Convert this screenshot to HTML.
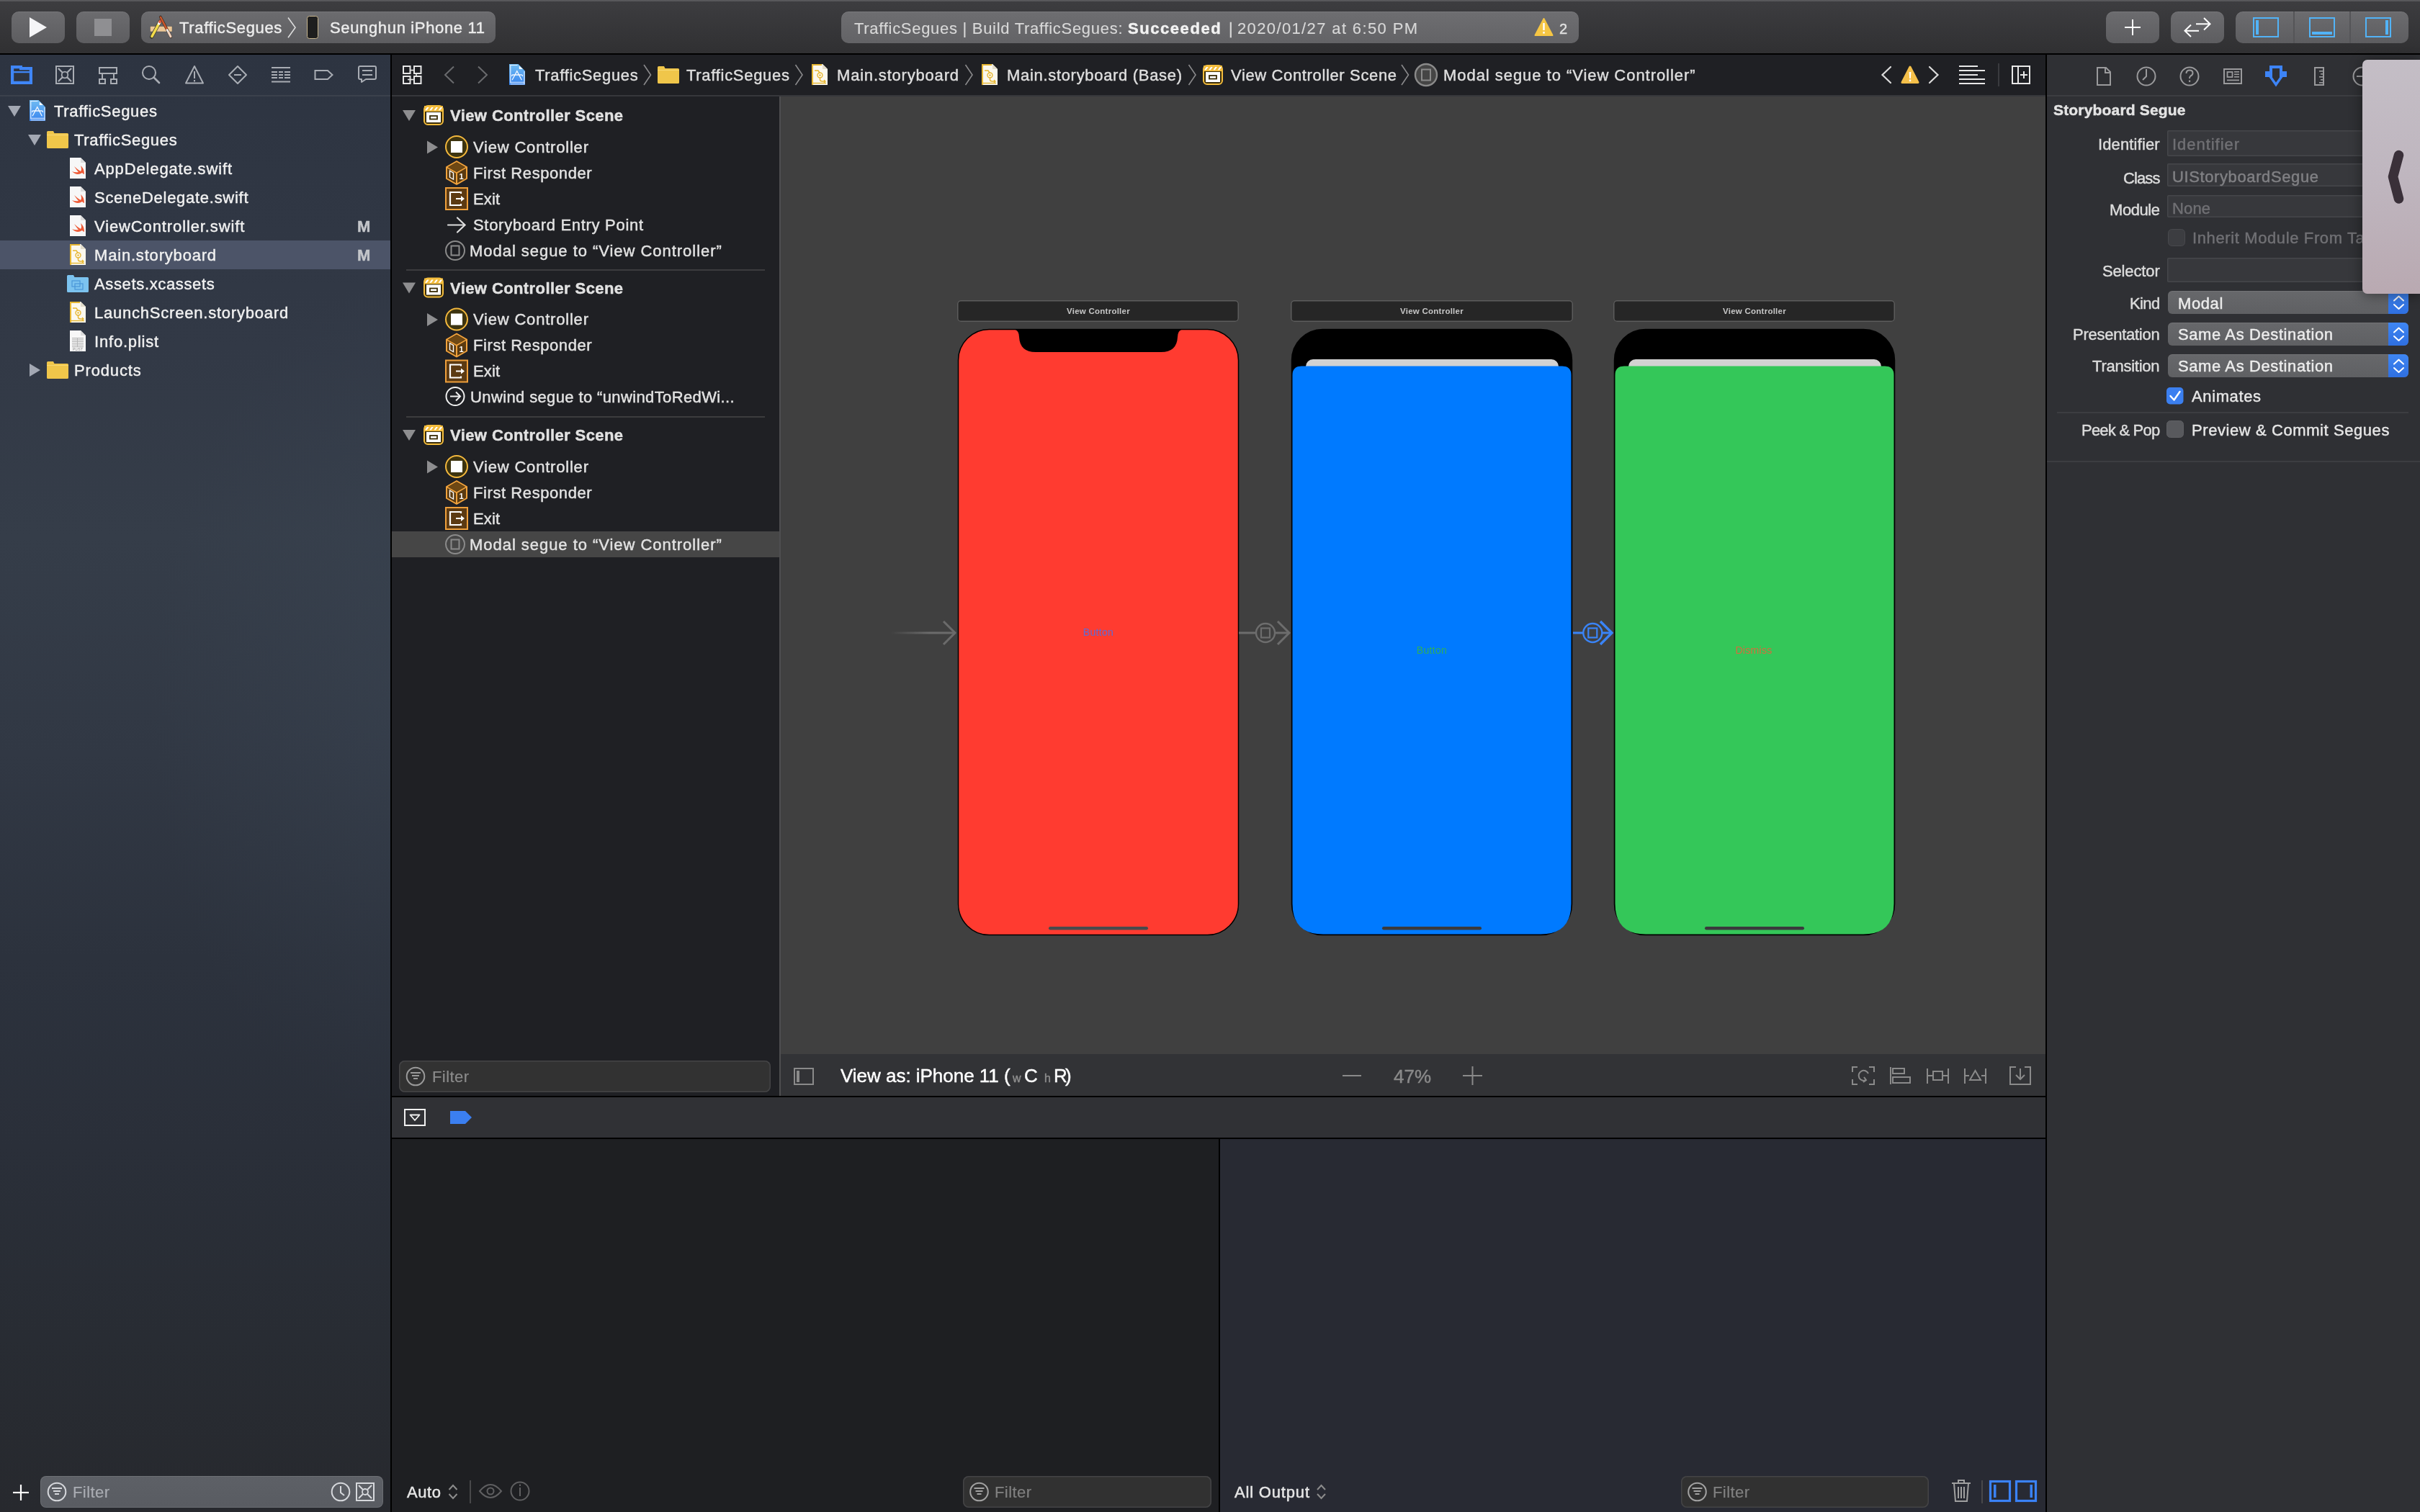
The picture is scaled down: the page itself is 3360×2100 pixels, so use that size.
<!DOCTYPE html>
<html><head><meta charset="utf-8"><style>
*{box-sizing:border-box;margin:0;padding:0}
html,body{width:3360px;height:2100px;overflow:hidden;background:#000;font-family:"Liberation Sans",sans-serif;color:#e6e6e6}
.a{position:absolute}
.t{position:absolute;white-space:pre;line-height:1;-webkit-text-stroke:0.45px currentColor;will-change:transform}
.ov{position:absolute;left:0;top:0;width:3360px;height:2100px;overflow:visible}
</style></head><body>
<div class="a" style="left:0px;top:0px;width:3360px;height:74px;background:linear-gradient(#3d3d40,#303032);"></div>
<div class="a" style="left:0px;top:0px;width:3360px;height:2px;background:#58585b;"></div>
<div class="a" style="left:0px;top:74px;width:3360px;height:2px;background:#000;"></div>
<div class="a" style="left:0px;top:76px;width:542px;height:2024px;background:radial-gradient(ellipse 520px 800px at 600px 900px, rgba(70,84,100,0.22), rgba(70,84,100,0) 75%),linear-gradient(180deg,#2d3441 0%,#323946 20%,#353d49 33%,#313844 48%,#2c323d 62%,#2a2f39 75%,#282c33 88%,#27292e 100%);"></div>
<div class="a" style="left:542px;top:76px;width:2px;height:2024px;background:#000;"></div>
<div class="a" style="left:544px;top:76px;width:2296px;height:56px;background:#1f2024;"></div>
<div class="a" style="left:544px;top:132px;width:2296px;height:2px;background:#36373b;"></div>
<div class="a" style="left:544px;top:134px;width:538px;height:1388px;background:#1f2024;"></div>
<div class="a" style="left:1082px;top:134px;width:2px;height:1388px;background:#4e4e50;"></div>
<div class="a" style="left:1084px;top:134px;width:1756px;height:1330px;background:#404040;"></div>
<div class="a" style="left:1084px;top:1464px;width:1756px;height:58px;background:#323336;"></div>
<div class="a" style="left:544px;top:1522px;width:2296px;height:2px;background:#000;"></div>
<div class="a" style="left:544px;top:1524px;width:2296px;height:56px;background:#303135;"></div>
<div class="a" style="left:544px;top:1580px;width:2296px;height:2px;background:#000;"></div>
<div class="a" style="left:544px;top:1582px;width:1148px;height:518px;background:#1e1f22;"></div>
<div class="a" style="left:1692px;top:1582px;width:2px;height:518px;background:#000;"></div>
<div class="a" style="left:1694px;top:1582px;width:1146px;height:518px;background:#282a33;"></div>
<div class="a" style="left:2840px;top:76px;width:2px;height:2024px;background:#000;"></div>
<div class="a" style="left:2842px;top:76px;width:518px;height:2024px;background:#2f3034;"></div>
<div class="a" style="left:544px;top:132px;width:0px;height:0px;background:#000;"></div>
<div class="a" style="left:0px;top:132px;width:542px;height:2px;background:#3b414c;"></div>
<div class="a" style="left:2842px;top:132px;width:518px;height:2px;background:#3c3d41;"></div>
<div class="a" style="left:16px;top:16px;width:74px;height:44px;background:linear-gradient(#6c6c6f,#5d5d60);border-radius:10px;box-shadow:inset 0 1px 0 rgba(255,255,255,0.08)"></div>
<div class="a" style="left:106px;top:16px;width:74px;height:44px;background:linear-gradient(#6c6c6f,#5d5d60);border-radius:10px;box-shadow:inset 0 1px 0 rgba(255,255,255,0.08)"></div>
<div class="a" style="left:196px;top:16px;width:492px;height:44px;background:linear-gradient(#6c6c6f,#5d5d60);border-radius:10px;box-shadow:inset 0 1px 0 rgba(255,255,255,0.08)"></div>
<div class="a" style="left:2924px;top:16px;width:74px;height:44px;background:linear-gradient(#6c6c6f,#5d5d60);border-radius:10px;box-shadow:inset 0 1px 0 rgba(255,255,255,0.08)"></div>
<div class="a" style="left:3014px;top:16px;width:74px;height:44px;background:linear-gradient(#6c6c6f,#5d5d60);border-radius:10px;box-shadow:inset 0 1px 0 rgba(255,255,255,0.08)"></div>
<div class="a" style="left:3104px;top:16px;width:240px;height:44px;background:linear-gradient(#6c6c6f,#5d5d60);border-radius:10px;box-shadow:inset 0 1px 0 rgba(255,255,255,0.08)"></div>
<div class="a" style="left:1168px;top:16px;width:1024px;height:44px;background:linear-gradient(#6e6e71,#636366);border-radius:10px;box-shadow:inset 0 1px 0 rgba(255,255,255,0.08)"></div>
<svg class="ov" width="3360" height="2100" viewBox="0 0 3360 2100"><polygon points="41,24 65,38 41,52" fill="#f5f5f7"/>
<rect x="131" y="26" width="24" height="24" fill="#8f8f92"/>
<rect x="208.5" y="36.5" width="30.5" height="7.5" fill="#ecc796" stroke="#555" stroke-width="0.5"/><g stroke-linecap="round"><line x1="210.5" y1="51.3" x2="222.4" y2="29.6" stroke="#3a3a2a" stroke-width="5"/><line x1="211" y1="50.5" x2="222" y2="30.3" stroke="#f3dc4c" stroke-width="3.6"/><line x1="220.6" y1="32.8" x2="222" y2="30.3" stroke="#f4f4f4" stroke-width="3.6"/><line x1="222" y1="30.3" x2="222.6" y2="29.2" stroke="#e45a40" stroke-width="3.6"/><line x1="222.8" y1="23.6" x2="237.2" y2="51.2" stroke="#3a2a20" stroke-width="3.8"/><line x1="223" y1="24" x2="232" y2="41.3" stroke="#c9562a" stroke-width="2.6"/><line x1="232" y1="41.3" x2="234" y2="45" stroke="#eeeeee" stroke-width="2.6"/><line x1="234" y1="45" x2="237" y2="50.8" stroke="#f1d2bd" stroke-width="3"/></g></svg>
<div class="t" style="left:249px;top:28.1px;font-size:22px;color:#ececec;font-weight:400;letter-spacing:0.65px;">TrafficSegues</div>
<svg class="ov" width="3360" height="2100" viewBox="0 0 3360 2100"><polyline points="400,24.5 410,38.3 400,52.2" fill="none" stroke="#dcdcdc" stroke-width="1.6"/>
<rect x="426.5" y="22.5" width="15" height="31" rx="3" fill="#1e1e1e" stroke="#c8b68e" stroke-width="1"/></svg>
<div class="t" style="left:458px;top:28.1px;font-size:22px;color:#ececec;font-weight:400;letter-spacing:0.65px;">Seunghun iPhone 11</div>
<div class="t" style="left:1185.5px;top:28.6px;font-size:22px;color:#d8d8d8;font-weight:400;letter-spacing:0.708px;-webkit-text-stroke:0.15px #d8d8d8">TrafficSegues | Build TrafficSegues:</div>
<div class="t" style="left:1566.4px;top:28.6px;font-size:22px;color:#f2f2f2;font-weight:700;letter-spacing:1.555px;">Succeeded</div>
<div class="t" style="left:1706px;top:28.6px;font-size:22px;color:#d8d8d8;font-weight:400;letter-spacing:0px;">|</div>
<div class="t" style="left:1717.8px;top:28.6px;font-size:22px;color:#d8d8d8;font-weight:400;letter-spacing:1.371px;-webkit-text-stroke:0.15px #d8d8d8">2020/01/27 at 6:50 PM</div>
<svg class="ov" width="3360" height="2100" viewBox="0 0 3360 2100"><path d="M2143.5,26 L2155.5,49 L2131.5,49 Z" fill="#f6c644" stroke="#f6c644" stroke-width="2" stroke-linejoin="round"/><rect x="2142.3" y="32" width="2.4" height="10" fill="#fff"/><rect x="2142.3" y="44" width="2.4" height="2.6" fill="#fff"/></svg>
<div class="t" style="left:2165px;top:29.8px;font-size:20px;color:#e0e0e0;font-weight:400;letter-spacing:0px;">2</div>
<svg class="ov" width="3360" height="2100" viewBox="0 0 3360 2100"><line x1="2950" y1="38" x2="2972" y2="38" stroke="#fff" stroke-width="2"/><line x1="2961" y1="27" x2="2961" y2="49" stroke="#fff" stroke-width="2"/>
<g stroke="#fff" stroke-width="2" fill="none"><line x1="3049" y1="33.3" x2="3069" y2="33.3"/><polyline points="3060,25 3068.5,33.3 3060,41.5"/><line x1="3053" y1="42.8" x2="3034" y2="42.8"/><polyline points="3042,34.5 3033.5,42.8 3042,51"/></g></svg>
<div class="a" style="left:3184px;top:16px;width:2px;height:44px;background:#555558;"></div>
<div class="a" style="left:3262px;top:16px;width:2px;height:44px;background:#555558;"></div>
<svg class="ov" width="3360" height="2100" viewBox="0 0 3360 2100"><g stroke="#52b3f7" stroke-width="2" fill="none"><rect x="3129" y="25" width="34" height="26"/><rect x="3207" y="25" width="34" height="26"/><rect x="3285" y="25" width="34" height="26"/></g><rect x="3132" y="28" width="4" height="20" fill="#52b3f7"/><rect x="3210" y="44" width="28" height="4" fill="#52b3f7"/><rect x="3312" y="28" width="4" height="20" fill="#52b3f7"/>
<path fill="#3f86f7" fill-rule="evenodd" d="M15,91 H31 V93 H45 V117 H15 Z M19.2,95.2 H27 V97.3 H40.8 V99 H19.2 Z M19.2,101.2 H40.8 V112.8 H19.2 Z"/>
<g stroke="#a9adb4" fill="none" stroke-width="2"><rect x="78" y="92" width="24" height="24"/><circle cx="90" cy="104" r="4.3" stroke-width="1.8"/></g><g stroke="#a9adb4" stroke-width="2.2" stroke-linecap="round"><line x1="81.5" y1="95.5" x2="86.5" y2="100.5"/><line x1="98.5" y1="95.5" x2="93.5" y2="100.5"/><line x1="81.5" y1="112.5" x2="86.5" y2="107.5"/><line x1="98.5" y1="112.5" x2="93.5" y2="107.5"/></g>
<g stroke="#a9adb4" fill="none" stroke-width="2"><rect x="138" y="94" width="24" height="8"/><rect x="138" y="110" width="8" height="6"/><rect x="154" y="110" width="8" height="6"/><line x1="142" y1="102" x2="142" y2="110"/><line x1="158" y1="102" x2="158" y2="110"/></g>
<g stroke="#a9adb4" fill="none" stroke-width="2"><circle cx="207" cy="101" r="9"/><line x1="213.5" y1="107.5" x2="221" y2="115" stroke-width="2.6" stroke-linecap="round"/></g>
<path d="M270,92 L282,115.5 H258 Z" fill="none" stroke="#a9adb4" stroke-width="2" stroke-linejoin="round"/><rect x="269" y="99" width="2" height="10" fill="#a9adb4"/><rect x="269" y="111" width="2" height="2.4" fill="#a9adb4"/>
<path d="M330,92 L342,104 L330,116 L318,104 Z" fill="none" stroke="#a9adb4" stroke-width="2" stroke-linejoin="round"/><rect x="325" y="103" width="10" height="2" fill="#a9adb4"/>
<g fill="#a9adb4"><rect x="377" y="93" width="26" height="2"/><rect x="377" y="112.5" width="26" height="2"/><rect x="377" y="99" width="8" height="2"/><rect x="387" y="99" width="6" height="2"/><rect x="395" y="99" width="8" height="2"/><rect x="377" y="103" width="8" height="2"/><rect x="387" y="103" width="6" height="2"/><rect x="395" y="103" width="8" height="2"/><rect x="377" y="107" width="8" height="2"/><rect x="387" y="107" width="6" height="2"/><rect x="395" y="107" width="8" height="2"/></g>
<path d="M437.5,98 H455 L461.5,104 L455,110 H437.5 Z" fill="none" stroke="#a9adb4" stroke-width="2"/>
<path d="M500,92 H520 Q522,92 522,94 V108 Q522,110 520,110 H508 L502,114 V110 H500 Q498,110 498,108 V94 Q498,92 500,92 Z" fill="none" stroke="#a9adb4" stroke-width="2" stroke-linejoin="round"/><rect x="503" y="97" width="14" height="2" fill="#a9adb4"/><rect x="503" y="103" width="14" height="2" fill="#a9adb4"/></svg>
<div class="a" style="left:0px;top:334px;width:542px;height:40px;background:#4c5468;"></div>
<svg class="ov" width="3360" height="2100" viewBox="0 0 3360 2100"><polygon points="11,147 29,147 20,162" fill="#a3a8b3"/>
<defs><linearGradient id="pg41139" x1="0" y1="0" x2="0" y2="1"><stop offset="0" stop-color="#72bdf2"/><stop offset="1" stop-color="#3784ef"/></linearGradient></defs><path d="M41,139 H53.6 L63,148.4 V168 H41 Z" fill="url(#pg41139)"/><path d="M54.8,141.6 V146 H59.9 Z" fill="#ffffff"/><path d="M42.8,165.2 V140.5 H52.5 M62,149 V166.7 H42.8 M42.8,164.2 H62" fill="none" stroke="#e6f1ff" stroke-width="1.1"/><g stroke="#f4f8ff" stroke-width="1.3" fill="none" stroke-linecap="round"><path d="M45.3,160.7 L51.8,148.6 L58.1,160.7"/><path d="M44.8,155.5 Q44.3,153.5 47,154 H56.5 Q59.6,153.5 59.4,155.5"/></g></svg>
<div class="t" style="left:75px;top:143.9px;font-size:22px;color:#f0f0f0;font-weight:400;letter-spacing:0.707px;">TrafficSegues</div>
<svg class="ov" width="3360" height="2100" viewBox="0 0 3360 2100"><polygon points="39,187 57,187 48,202" fill="#a3a8b3"/>
<path d="M65,183.5 Q65,182 66.5,182 H74 L75.5,185 H93.5 Q95,185 95,186.5 V204.5 Q95,206 93.5,206 H66.5 Q65,206 65,204.5 Z" fill="#f0c64a"/><rect x="65" y="187" width="30" height="1" fill="#f7d873"/></svg>
<div class="t" style="left:103px;top:183.9px;font-size:22px;color:#f0f0f0;font-weight:400;letter-spacing:0.682px;">TrafficSegues</div>
<svg class="ov" width="3360" height="2100" viewBox="0 0 3360 2100"><path d="M97,219 H112 L119,226 V248 H97 Z" fill="#f7f7f7"/><path d="M112,219 V226 H119" fill="#dcdcdc"/><path d="M100,238 Q107,245 114,240 Q116,242 117,242 Q117,234 112,230 Q114,235 112,238 Q107,235 103,231 Q107,237 109,239 Q104,240 100,238 Z" fill="#ee5a36"/></svg>
<div class="t" style="left:130.7px;top:223.9px;font-size:22px;color:#f0f0f0;font-weight:400;letter-spacing:0.855px;">AppDelegate.swift</div>
<svg class="ov" width="3360" height="2100" viewBox="0 0 3360 2100"><path d="M97,259 H112 L119,266 V288 H97 Z" fill="#f7f7f7"/><path d="M112,259 V266 H119" fill="#dcdcdc"/><path d="M100,278 Q107,285 114,280 Q116,282 117,282 Q117,274 112,270 Q114,275 112,278 Q107,275 103,271 Q107,277 109,279 Q104,280 100,278 Z" fill="#ee5a36"/></svg>
<div class="t" style="left:130.7px;top:263.9px;font-size:22px;color:#f0f0f0;font-weight:400;letter-spacing:0.72px;">SceneDelegate.swift</div>
<svg class="ov" width="3360" height="2100" viewBox="0 0 3360 2100"><path d="M97,299 H112 L119,306 V328 H97 Z" fill="#f7f7f7"/><path d="M112,299 V306 H119" fill="#dcdcdc"/><path d="M100,318 Q107,325 114,320 Q116,322 117,322 Q117,314 112,310 Q114,315 112,318 Q107,315 103,311 Q107,317 109,319 Q104,320 100,318 Z" fill="#ee5a36"/></svg>
<div class="t" style="left:130.7px;top:303.9px;font-size:22px;color:#f0f0f0;font-weight:400;letter-spacing:0.881px;">ViewController.swift</div>
<div class="t" style="left:496px;top:303.9px;font-size:22px;color:#c4c6ca;font-weight:700;letter-spacing:0px;">M</div>
<svg class="ov" width="3360" height="2100" viewBox="0 0 3360 2100"><path d="M97,339 H112 L119,346 V368 H97 Z" fill="#fbf8ee"/><path d="M112,339 V346 H119" fill="#e2dccb"/><path d="M98,340 H111" stroke="#e7b733" stroke-width="2"/><path d="M98,339 V368" stroke="#e7b733" stroke-width="2"/><g stroke="#e7b733" stroke-width="1.4" fill="none"><path d="M101,348 H106 L108,351"/><circle cx="108.5" cy="354.5" r="3.5"/><path d="M108.5,358 V361 Q109,363 112,363 H116 M114,361 L116,363 L114,365"/><path d="M99,365.5 H117"/></g><circle cx="108.5" cy="354.5" r="1.2" fill="#e7b733"/></svg>
<div class="t" style="left:130.7px;top:343.9px;font-size:22px;color:#f0f0f0;font-weight:400;letter-spacing:0.812px;">Main.storyboard</div>
<div class="t" style="left:496px;top:343.9px;font-size:22px;color:#c4c6ca;font-weight:700;letter-spacing:0px;">M</div>
<svg class="ov" width="3360" height="2100" viewBox="0 0 3360 2100"><path d="M93,383.5 Q93,382 94.5,382 H102 L103.5,385 H121.5 Q123,385 123,386.5 V404.5 Q123,406 121.5,406 H94.5 Q93,406 93,404.5 Z" fill="#7cc3ef"/><g stroke="#4a97d8" stroke-width="1.2" fill="none"><rect x="100" y="390" width="11" height="8"/><rect x="104" y="394" width="11" height="8"/></g></svg>
<div class="t" style="left:130.7px;top:383.9px;font-size:22px;color:#f0f0f0;font-weight:400;letter-spacing:0.643px;">Assets.xcassets</div>
<svg class="ov" width="3360" height="2100" viewBox="0 0 3360 2100"><path d="M97,419 H112 L119,426 V448 H97 Z" fill="#fbf8ee"/><path d="M112,419 V426 H119" fill="#e2dccb"/><path d="M98,420 H111" stroke="#e7b733" stroke-width="2"/><path d="M98,419 V448" stroke="#e7b733" stroke-width="2"/><g stroke="#e7b733" stroke-width="1.4" fill="none"><path d="M101,428 H106 L108,431"/><circle cx="108.5" cy="434.5" r="3.5"/><path d="M108.5,438 V441 Q109,443 112,443 H116 M114,441 L116,443 L114,445"/><path d="M99,445.5 H117"/></g><circle cx="108.5" cy="434.5" r="1.2" fill="#e7b733"/></svg>
<div class="t" style="left:130.7px;top:423.9px;font-size:22px;color:#f0f0f0;font-weight:400;letter-spacing:0.781px;">LaunchScreen.storyboard</div>
<svg class="ov" width="3360" height="2100" viewBox="0 0 3360 2100"><path d="M97,459 H112 L119,466 V488 H97 Z" fill="#f7f7f7"/><path d="M112,459 V466 H119" fill="#dcdcdc"/><g fill="#b8b8b8"><rect x="100" y="469.0" width="16" height="1.2"/><rect x="100" y="471.4" width="16" height="1.2"/><rect x="100" y="473.8" width="16" height="1.2"/><rect x="100" y="476.2" width="16" height="1.2"/><rect x="100" y="478.6" width="16" height="1.2"/><rect x="100" y="481.0" width="16" height="1.2"/></g><rect x="107" y="469" width="1" height="13" fill="#b8b8b8"/><text x="108" y="486.5" font-size="5" font-family="Liberation Sans" fill="#888" text-anchor="middle">PLIST</text></svg>
<div class="t" style="left:130.7px;top:463.9px;font-size:22px;color:#f0f0f0;font-weight:400;letter-spacing:0.809px;">Info.plist</div>
<svg class="ov" width="3360" height="2100" viewBox="0 0 3360 2100"><polygon points="41,505 56,514 41,523" fill="#a3a8b3"/>
<path d="M65,503.5 Q65,502 66.5,502 H74 L75.5,505 H93.5 Q95,505 95,506.5 V524.5 Q95,526 93.5,526 H66.5 Q65,526 65,524.5 Z" fill="#f0c64a"/><rect x="65" y="507" width="30" height="1" fill="#f7d873"/></svg>
<div class="t" style="left:103px;top:503.9px;font-size:22px;color:#f0f0f0;font-weight:400;letter-spacing:0.841px;">Products</div>
<svg class="ov" width="3360" height="2100" viewBox="0 0 3360 2100"><g stroke="#ffffff" stroke-width="2.2"><line x1="18" y1="2073" x2="40" y2="2073"/><line x1="29" y1="2062" x2="29" y2="2084"/></g></svg>
<div class="a" style="left:56px;top:2050px;width:476px;height:44px;background:linear-gradient(#5d6066,#595c62);border-radius:8px;box-shadow:inset 0 0 0 1px rgba(255,255,255,0.10)"></div>
<svg class="ov" width="3360" height="2100" viewBox="0 0 3360 2100"><circle cx="79" cy="2072" r="12.3" fill="none" stroke="#d6d8dc" stroke-width="2"/><g fill="#d6d8dc"><rect x="72" y="2066" width="14" height="2"/><rect x="74" y="2070" width="10" height="2"/><rect x="76" y="2074" width="6" height="2"/></g></svg>
<div class="t" style="left:101px;top:2062.1px;font-size:22px;color:#a9acb2;font-weight:400;letter-spacing:0.422px;-webkit-text-stroke:0.2px #a9acb2">Filter</div>
<svg class="ov" width="3360" height="2100" viewBox="0 0 3360 2100"><circle cx="473" cy="2072" r="12.3" fill="none" stroke="#d6d8dc" stroke-width="2"/><path d="M473,2064 V2073 L478,2077" fill="none" stroke="#d6d8dc" stroke-width="2"/>
<g stroke="#d6d8dc" fill="none" stroke-width="2"><rect x="495" y="2060" width="24" height="24"/><circle cx="507" cy="2072" r="4" stroke-width="1.8"/></g><g stroke="#d6d8dc" stroke-width="2" stroke-linecap="round"><line x1="498.5" y1="2063.5" x2="503.5" y2="2068.5"/><line x1="515.5" y1="2063.5" x2="510.5" y2="2068.5"/><line x1="498.5" y1="2080.5" x2="503.5" y2="2075.5"/><line x1="515.5" y1="2080.5" x2="510.5" y2="2075.5"/></g>
<g stroke="#e6e6e6" stroke-width="2" fill="none"><rect x="560" y="92" width="9.5" height="10"/><rect x="575" y="92" width="9.5" height="10"/><rect x="560" y="106" width="9.5" height="10"/><rect x="575" y="106" width="9.5" height="10"/></g><g stroke="#e6e6e6" stroke-width="1.6"><line x1="569" y1="97.5" x2="575" y2="97.5"/><line x1="578" y1="102" x2="578" y2="106"/><line x1="566" y1="110.5" x2="575" y2="110.5"/></g>
<g stroke="#6a6b6e" stroke-width="2" fill="none"><polyline points="630,92.5 618,104 630,115.5"/><polyline points="664,92.5 676,104 664,115.5"/></g>
<defs><linearGradient id="pg70789" x1="0" y1="0" x2="0" y2="1"><stop offset="0" stop-color="#72bdf2"/><stop offset="1" stop-color="#3784ef"/></linearGradient></defs><path d="M707,89 H719.6 L729,98.4 V118 H707 Z" fill="url(#pg70789)"/><path d="M720.8,91.6 V96 H725.9 Z" fill="#ffffff"/><path d="M708.8,115.2 V90.5 H718.5 M728,99 V116.7 H708.8 M708.8,114.2 H728" fill="none" stroke="#e6f1ff" stroke-width="1.1"/><g stroke="#f4f8ff" stroke-width="1.3" fill="none" stroke-linecap="round"><path d="M711.3,110.7 L717.8,98.6 L724.1,110.7"/><path d="M710.8,105.5 Q710.3,103.5 713,104 H722.5 Q725.6,103.5 725.4,105.5"/></g></svg>
<div class="t" style="left:743px;top:93.9px;font-size:22px;color:#dedede;font-weight:400;letter-spacing:0.69px;">TrafficSegues</div>
<svg class="ov" width="3360" height="2100" viewBox="0 0 3360 2100"><polyline points="894,90 903.5,104.0 894,118" fill="none" stroke="#8a8a8c" stroke-width="1.6"/>
<path d="M913,93.5 Q913,92 914.5,92 H922 L923.5,95 H941.5 Q943,95 943,96.5 V114.5 Q943,116 941.5,116 H914.5 Q913,116 913,114.5 Z" fill="#f0c64a"/><rect x="913" y="97" width="30" height="1" fill="#f7d873"/></svg>
<div class="t" style="left:953px;top:93.9px;font-size:22px;color:#dedede;font-weight:400;letter-spacing:0.707px;">TrafficSegues</div>
<svg class="ov" width="3360" height="2100" viewBox="0 0 3360 2100"><polyline points="1104.5,90 1114.0,104.0 1104.5,118" fill="none" stroke="#8a8a8c" stroke-width="1.6"/>
<path d="M1127,89 H1142 L1149,96 V118 H1127 Z" fill="#fbf8ee"/><path d="M1142,89 V96 H1149" fill="#e2dccb"/><path d="M1128,90 H1141" stroke="#e7b733" stroke-width="2"/><path d="M1128,89 V118" stroke="#e7b733" stroke-width="2"/><g stroke="#e7b733" stroke-width="1.4" fill="none"><path d="M1131,98 H1136 L1138,101"/><circle cx="1138.5" cy="104.5" r="3.5"/><path d="M1138.5,108 V111 Q1139,113 1142,113 H1146 M1144,111 L1146,113 L1144,115"/><path d="M1129,115.5 H1147"/></g><circle cx="1138.5" cy="104.5" r="1.2" fill="#e7b733"/></svg>
<div class="t" style="left:1162px;top:93.9px;font-size:22px;color:#dedede;font-weight:400;letter-spacing:0.805px;">Main.storyboard</div>
<svg class="ov" width="3360" height="2100" viewBox="0 0 3360 2100"><polyline points="1340.5,90 1350.0,104.0 1340.5,118" fill="none" stroke="#8a8a8c" stroke-width="1.6"/>
<path d="M1363,89 H1378 L1385,96 V118 H1363 Z" fill="#fbf8ee"/><path d="M1378,89 V96 H1385" fill="#e2dccb"/><path d="M1364,90 H1377" stroke="#e7b733" stroke-width="2"/><path d="M1364,89 V118" stroke="#e7b733" stroke-width="2"/><g stroke="#e7b733" stroke-width="1.4" fill="none"><path d="M1367,98 H1372 L1374,101"/><circle cx="1374.5" cy="104.5" r="3.5"/><path d="M1374.5,108 V111 Q1375,113 1378,113 H1382 M1380,111 L1382,113 L1380,115"/><path d="M1365,115.5 H1383"/></g><circle cx="1374.5" cy="104.5" r="1.2" fill="#e7b733"/></svg>
<div class="t" style="left:1398px;top:93.9px;font-size:22px;color:#dedede;font-weight:400;letter-spacing:0.684px;">Main.storyboard (Base)</div>
<svg class="ov" width="3360" height="2100" viewBox="0 0 3360 2100"><polyline points="1650.5,90 1660.0,104.0 1650.5,118" fill="none" stroke="#8a8a8c" stroke-width="1.6"/>
<rect x="1671" y="91" width="26" height="26" rx="5" fill="#3a2d08" stroke="#f4bd3d" stroke-width="2"/><rect x="1671" y="91" width="26" height="8" fill="#f4bd3d"/><g fill="#fff"><path d="M1672.0,97.2 L1675.0,93 H1677.6 L1674.6,97.2 Z"/><path d="M1678.2,97.2 L1681.2,93 H1683.8 L1680.8,97.2 Z"/><path d="M1684.4,97.2 L1687.4,93 H1690.0 L1687.0,97.2 Z"/><path d="M1690.6,97.2 L1693.6,93 H1696.1999999999998 L1693.1999999999998,97.2 Z"/></g><rect x="1674" y="100" width="20" height="14" fill="#fff"/><rect x="1679" y="105" width="10" height="4.5" fill="none" stroke="#3a2d08" stroke-width="1.8"/></svg>
<div class="t" style="left:1709px;top:93.9px;font-size:22px;color:#dedede;font-weight:400;letter-spacing:0.637px;">View Controller Scene</div>
<svg class="ov" width="3360" height="2100" viewBox="0 0 3360 2100"><polyline points="1946,90 1955.5,104.0 1946,118" fill="none" stroke="#8a8a8c" stroke-width="1.6"/>
<circle cx="1980" cy="104" r="15" fill="#454545" stroke="#8a8a8a" stroke-width="2.4"/><rect x="1974" y="96.5" width="12" height="15" fill="none" stroke="#8a8a8a" stroke-width="2"/></svg>
<div class="t" style="left:2004px;top:93.9px;font-size:22px;color:#dedede;font-weight:400;letter-spacing:0.956px;">Modal segue to “View Controller”</div>
<svg class="ov" width="3360" height="2100" viewBox="0 0 3360 2100"><g stroke="#dcdcdc" stroke-width="2.2" fill="none" stroke-linecap="round"><polyline points="2625,93 2613.5,104 2625,115"/><polyline points="2679,93 2690.5,104 2679,115"/></g>
<path d="M2652,93 L2663,114.5 H2641 Z" fill="#f5c04a" stroke="#f5c04a" stroke-width="3" stroke-linejoin="round"/><path d="M2650.6,100 H2653.4 L2652.8,109 H2651.2 Z" fill="#fff"/><rect x="2650.8" y="110.5" width="2.4" height="2.6" fill="#fff"/>
<g fill="#e8e8e8"><rect x="2720" y="91" width="26" height="2"/><rect x="2720" y="97" width="36" height="2"/><rect x="2720" y="103" width="26" height="2"/><rect x="2720" y="109" width="36" height="2"/><rect x="2720" y="115" width="36" height="2"/></g></svg>
<div class="a" style="left:2774px;top:88px;width:2px;height:32px;background:#3a3b3f;"></div>
<svg class="ov" width="3360" height="2100" viewBox="0 0 3360 2100"><g stroke="#e8e8e8" stroke-width="2" fill="none"><rect x="2794" y="92" width="24" height="24"/><line x1="2802" y1="92" x2="2802" y2="116"/><line x1="2805" y1="104" x2="2815" y2="104"/><line x1="2810" y1="99" x2="2810" y2="109"/></g></svg>
<div class="a" style="left:544px;top:738px;width:538px;height:36px;background:#464646;"></div>
<svg class="ov" width="3360" height="2100" viewBox="0 0 3360 2100"><polygon points="559,153 577,153 568,168" fill="#8e8e90"/>
<rect x="589" y="147" width="26" height="26" rx="5" fill="#3a2d08" stroke="#f4bd3d" stroke-width="2"/><rect x="589" y="147" width="26" height="8" fill="#f4bd3d"/><g fill="#fff"><path d="M590.0,153.2 L593.0,149 H595.6 L592.6,153.2 Z"/><path d="M596.2,153.2 L599.2,149 H601.8000000000001 L598.8000000000001,153.2 Z"/><path d="M602.4,153.2 L605.4,149 H608.0 L605.0,153.2 Z"/><path d="M608.6,153.2 L611.6,149 H614.2 L611.2,153.2 Z"/></g><rect x="592" y="156" width="20" height="14" fill="#fff"/><rect x="597" y="161" width="10" height="4.5" fill="none" stroke="#3a2d08" stroke-width="1.8"/></svg>
<div class="t" style="left:625px;top:150.1px;font-size:22px;color:#e2e2e2;font-weight:700;letter-spacing:0.406px;">View Controller Scene</div>
<svg class="ov" width="3360" height="2100" viewBox="0 0 3360 2100"><polygon points="593,195.5 608,204.5 593,213.5" fill="#8e8e90"/>
<circle cx="634" cy="204.0" r="15" fill="#3d3410" stroke="#f3b83d" stroke-width="2"/><rect x="626" y="196.0" width="16" height="16" fill="#fff"/></svg>
<div class="t" style="left:657px;top:193.6px;font-size:22px;color:#e2e2e2;font-weight:400;letter-spacing:0.801px;">View Controller</div>
<svg class="ov" width="3360" height="2100" viewBox="0 0 3360 2100"><path d="M634,224.0 L648,232.0 V248.0 L634,256.0 L620,248.0 V232.0 Z" fill="#5a3a10" stroke="#f0a23c" stroke-width="2" stroke-linejoin="round"/><path d="M620,232.0 L634,240.0 L648,232.0 M634,240.0 V256.0" fill="none" stroke="#f0a23c" stroke-width="2"/><path d="M634,226.0 L646,232.5 L634,239.0 L622,232.5 Z" fill="#6e4814"/><rect x="624.5" y="237.0" width="5" height="9" fill="none" stroke="#fff" stroke-width="1.4" transform="skewY(30) translate(0,-360.34)"/><text x="640.5" y="249.0" font-size="11" font-weight="700" font-family="Liberation Sans" fill="#fff" text-anchor="middle">1</text></svg>
<div class="t" style="left:657px;top:229.6px;font-size:22px;color:#e2e2e2;font-weight:400;letter-spacing:0.579px;">First Responder</div>
<svg class="ov" width="3360" height="2100" viewBox="0 0 3360 2100"><rect x="619" y="261.0" width="30" height="30" fill="#5c3a12" stroke="#ee9f3b" stroke-width="2"/><path d="M640,269.0 V267.0 H625 V285.0 H640 V283.0" fill="none" stroke="#fff" stroke-width="2.2"/><path d="M633,276.0 H642" stroke="#fff" stroke-width="2"/><path d="M640,272.0 L645,276.0 L640,280.0 Z" fill="#fff"/></svg>
<div class="t" style="left:657px;top:265.6px;font-size:22px;color:#e2e2e2;font-weight:400;letter-spacing:0.109px;">Exit</div>
<svg class="ov" width="3360" height="2100" viewBox="0 0 3360 2100"><g stroke="#dedede" stroke-width="2.2" fill="none" stroke-linecap="round"><line x1="622" y1="312.5" x2="645" y2="312.5"/><polyline points="635,302.5 645.5,312.5 635,322.5"/></g></svg>
<div class="t" style="left:657px;top:301.6px;font-size:22px;color:#e2e2e2;font-weight:400;letter-spacing:0.699px;">Storyboard Entry Point</div>
<svg class="ov" width="3360" height="2100" viewBox="0 0 3360 2100"><circle cx="632" cy="348.0" r="13" fill="none" stroke="#8a8a8a" stroke-width="2"/><rect x="626.5" y="341.5" width="11" height="13" fill="none" stroke="#8a8a8a" stroke-width="2"/></svg>
<div class="t" style="left:652px;top:337.6px;font-size:22px;color:#e2e2e2;font-weight:400;letter-spacing:0.962px;">Modal segue to “View Controller”</div>
<div class="a" style="left:564px;top:374px;width:498px;height:2px;background:#3c3c3e;"></div>
<svg class="ov" width="3360" height="2100" viewBox="0 0 3360 2100"><polygon points="559,392.5 577,392.5 568,407.5" fill="#8e8e90"/>
<rect x="589" y="386.5" width="26" height="26" rx="5" fill="#3a2d08" stroke="#f4bd3d" stroke-width="2"/><rect x="589" y="386.5" width="26" height="8" fill="#f4bd3d"/><g fill="#fff"><path d="M590.0,392.7 L593.0,388.5 H595.6 L592.6,392.7 Z"/><path d="M596.2,392.7 L599.2,388.5 H601.8000000000001 L598.8000000000001,392.7 Z"/><path d="M602.4,392.7 L605.4,388.5 H608.0 L605.0,392.7 Z"/><path d="M608.6,392.7 L611.6,388.5 H614.2 L611.2,392.7 Z"/></g><rect x="592" y="395.5" width="20" height="14" fill="#fff"/><rect x="597" y="400.5" width="10" height="4.5" fill="none" stroke="#3a2d08" stroke-width="1.8"/></svg>
<div class="t" style="left:625px;top:389.6px;font-size:22px;color:#e2e2e2;font-weight:700;letter-spacing:0.406px;">View Controller Scene</div>
<svg class="ov" width="3360" height="2100" viewBox="0 0 3360 2100"><polygon points="593,435.0 608,444.0 593,453.0" fill="#8e8e90"/>
<circle cx="634" cy="443.5" r="15" fill="#3d3410" stroke="#f3b83d" stroke-width="2"/><rect x="626" y="435.5" width="16" height="16" fill="#fff"/></svg>
<div class="t" style="left:657px;top:433.1px;font-size:22px;color:#e2e2e2;font-weight:400;letter-spacing:0.801px;">View Controller</div>
<svg class="ov" width="3360" height="2100" viewBox="0 0 3360 2100"><path d="M634,463.5 L648,471.5 V487.5 L634,495.5 L620,487.5 V471.5 Z" fill="#5a3a10" stroke="#f0a23c" stroke-width="2" stroke-linejoin="round"/><path d="M620,471.5 L634,479.5 L648,471.5 M634,479.5 V495.5" fill="none" stroke="#f0a23c" stroke-width="2"/><path d="M634,465.5 L646,472.0 L634,478.5 L622,472.0 Z" fill="#6e4814"/><rect x="624.5" y="476.5" width="5" height="9" fill="none" stroke="#fff" stroke-width="1.4" transform="skewY(30) translate(0,-360.34)"/><text x="640.5" y="488.5" font-size="11" font-weight="700" font-family="Liberation Sans" fill="#fff" text-anchor="middle">1</text></svg>
<div class="t" style="left:657px;top:469.1px;font-size:22px;color:#e2e2e2;font-weight:400;letter-spacing:0.579px;">First Responder</div>
<svg class="ov" width="3360" height="2100" viewBox="0 0 3360 2100"><rect x="619" y="500.5" width="30" height="30" fill="#5c3a12" stroke="#ee9f3b" stroke-width="2"/><path d="M640,508.5 V506.5 H625 V524.5 H640 V522.5" fill="none" stroke="#fff" stroke-width="2.2"/><path d="M633,515.5 H642" stroke="#fff" stroke-width="2"/><path d="M640,511.5 L645,515.5 L640,519.5 Z" fill="#fff"/></svg>
<div class="t" style="left:657px;top:505.1px;font-size:22px;color:#e2e2e2;font-weight:400;letter-spacing:0.109px;">Exit</div>
<svg class="ov" width="3360" height="2100" viewBox="0 0 3360 2100"><circle cx="632" cy="550.5" r="12.5" fill="none" stroke="#f0f0f0" stroke-width="2"/><g stroke="#f0f0f0" stroke-width="2" fill="none"><line x1="625" y1="550.5" x2="639" y2="550.5"/><polyline points="633,544.5 639,550.5 633,556.5"/></g></svg>
<div class="t" style="left:653px;top:541.1px;font-size:22px;color:#e2e2e2;font-weight:400;letter-spacing:0.378px;">Unwind segue to “unwindToRedWi...</div>
<div class="a" style="left:564px;top:578px;width:498px;height:2px;background:#3c3c3e;"></div>
<svg class="ov" width="3360" height="2100" viewBox="0 0 3360 2100"><polygon points="559,597 577,597 568,612" fill="#8e8e90"/>
<rect x="589" y="591" width="26" height="26" rx="5" fill="#3a2d08" stroke="#f4bd3d" stroke-width="2"/><rect x="589" y="591" width="26" height="8" fill="#f4bd3d"/><g fill="#fff"><path d="M590.0,597.2 L593.0,593 H595.6 L592.6,597.2 Z"/><path d="M596.2,597.2 L599.2,593 H601.8000000000001 L598.8000000000001,597.2 Z"/><path d="M602.4,597.2 L605.4,593 H608.0 L605.0,597.2 Z"/><path d="M608.6,597.2 L611.6,593 H614.2 L611.2,597.2 Z"/></g><rect x="592" y="600" width="20" height="14" fill="#fff"/><rect x="597" y="605" width="10" height="4.5" fill="none" stroke="#3a2d08" stroke-width="1.8"/></svg>
<div class="t" style="left:625px;top:594.1px;font-size:22px;color:#e2e2e2;font-weight:700;letter-spacing:0.406px;">View Controller Scene</div>
<svg class="ov" width="3360" height="2100" viewBox="0 0 3360 2100"><polygon points="593,639.5 608,648.5 593,657.5" fill="#8e8e90"/>
<circle cx="634" cy="648.0" r="15" fill="#3d3410" stroke="#f3b83d" stroke-width="2"/><rect x="626" y="640.0" width="16" height="16" fill="#fff"/></svg>
<div class="t" style="left:657px;top:637.6px;font-size:22px;color:#e2e2e2;font-weight:400;letter-spacing:0.801px;">View Controller</div>
<svg class="ov" width="3360" height="2100" viewBox="0 0 3360 2100"><path d="M634,668.0 L648,676.0 V692.0 L634,700.0 L620,692.0 V676.0 Z" fill="#5a3a10" stroke="#f0a23c" stroke-width="2" stroke-linejoin="round"/><path d="M620,676.0 L634,684.0 L648,676.0 M634,684.0 V700.0" fill="none" stroke="#f0a23c" stroke-width="2"/><path d="M634,670.0 L646,676.5 L634,683.0 L622,676.5 Z" fill="#6e4814"/><rect x="624.5" y="681.0" width="5" height="9" fill="none" stroke="#fff" stroke-width="1.4" transform="skewY(30) translate(0,-360.34)"/><text x="640.5" y="693.0" font-size="11" font-weight="700" font-family="Liberation Sans" fill="#fff" text-anchor="middle">1</text></svg>
<div class="t" style="left:657px;top:673.6px;font-size:22px;color:#e2e2e2;font-weight:400;letter-spacing:0.579px;">First Responder</div>
<svg class="ov" width="3360" height="2100" viewBox="0 0 3360 2100"><rect x="619" y="705.0" width="30" height="30" fill="#5c3a12" stroke="#ee9f3b" stroke-width="2"/><path d="M640,713.0 V711.0 H625 V729.0 H640 V727.0" fill="none" stroke="#fff" stroke-width="2.2"/><path d="M633,720.0 H642" stroke="#fff" stroke-width="2"/><path d="M640,716.0 L645,720.0 L640,724.0 Z" fill="#fff"/></svg>
<div class="t" style="left:657px;top:709.6px;font-size:22px;color:#e2e2e2;font-weight:400;letter-spacing:0.109px;">Exit</div>
<svg class="ov" width="3360" height="2100" viewBox="0 0 3360 2100"><circle cx="632" cy="756.0" r="13" fill="none" stroke="#8a8a8a" stroke-width="2"/><rect x="626.5" y="749.5" width="11" height="13" fill="none" stroke="#8a8a8a" stroke-width="2"/></svg>
<div class="t" style="left:652px;top:745.6px;font-size:22px;color:#e2e2e2;font-weight:400;letter-spacing:0.962px;">Modal segue to “View Controller”</div>
<div class="a" style="left:554px;top:1473px;width:516px;height:44px;background:#323232;border-radius:8px;box-shadow:inset 0 0 0 1.5px #444446"></div>
<svg class="ov" width="3360" height="2100" viewBox="0 0 3360 2100"><circle cx="577" cy="1495" r="12.3" fill="none" stroke="#9a9a9a" stroke-width="2"/><g fill="#9a9a9a"><rect x="570" y="1489" width="14" height="2"/><rect x="572" y="1493" width="10" height="2"/><rect x="574" y="1497" width="6" height="2"/></g></svg>
<div class="t" style="left:599.5px;top:1485.1px;font-size:22px;color:#8a8a8a;font-weight:400;letter-spacing:0.422px;-webkit-text-stroke:0.2px #8a8a8a">Filter</div>
<div class="a" style="left:1329px;top:417px;width:391px;height:30px;background:#262626;border-radius:5px;box-shadow:inset 0 0 0 1.5px #5c5c5c"></div>
<div class="t" style="left:1024.5px;width:1000px;text-align:center;top:426.5px;font-size:11.5px;color:#c6c6c6;font-weight:700;letter-spacing:0.25px;-webkit-text-stroke:0;">View Controller</div>
<div class="a" style="left:1792px;top:417px;width:392px;height:30px;background:#262626;border-radius:5px;box-shadow:inset 0 0 0 1.5px #5c5c5c"></div>
<div class="t" style="left:1488.0px;width:1000px;text-align:center;top:426.5px;font-size:11.5px;color:#c6c6c6;font-weight:700;letter-spacing:0.25px;-webkit-text-stroke:0;">View Controller</div>
<div class="a" style="left:2240px;top:417px;width:391px;height:30px;background:#262626;border-radius:5px;box-shadow:inset 0 0 0 1.5px #5c5c5c"></div>
<div class="t" style="left:1935.5px;width:1000px;text-align:center;top:426.5px;font-size:11.5px;color:#c6c6c6;font-weight:700;letter-spacing:0.25px;-webkit-text-stroke:0;">View Controller</div>
<svg class="ov" width="3360" height="2100" viewBox="0 0 3360 2100"><rect x="1330.5" y="457.5" width="389" height="841" rx="43" fill="#ff3b30" stroke="#000" stroke-width="1.5"/><path d="M1407,457.5 Q1413,457.5 1414.5,464 L1415,468 Q1416,489 1438,489 H1612 Q1634,489 1635,468 L1635.5,464 Q1637,457.5 1643,457.5 Z" fill="#000"/><rect x="1456" y="1287" width="138" height="4.5" rx="2.2" fill="#4a4a4c"/>
<rect x="1793.5" y="457.5" width="389" height="841" rx="43" fill="#000" stroke="#000" stroke-width="1.5"/><rect x="1813" y="499" width="351" height="30" rx="10" fill="#d2d2d2"/><path d="M1794.5,521 Q1794.5,508.5 1807,508.5 H2169 Q2181.5,508.5 2181.5,521 V1255 Q2181.5,1297.5 2139,1297.5 H1837 Q1794.5,1297.5 1794.5,1255 Z" fill="#007aff"/><rect x="1919" y="1287" width="138" height="4.5" rx="2.2" fill="#3a3a3c"/>
<rect x="2241.5" y="457.5" width="389" height="841" rx="43" fill="#000" stroke="#000" stroke-width="1.5"/><rect x="2261" y="499" width="351" height="30" rx="10" fill="#d2d2d2"/><path d="M2242.5,521 Q2242.5,508.5 2255,508.5 H2617 Q2629.5,508.5 2629.5,521 V1255 Q2629.5,1297.5 2587,1297.5 H2285 Q2242.5,1297.5 2242.5,1255 Z" fill="#34c759"/><rect x="2367" y="1287" width="138" height="4.5" rx="2.2" fill="#3a3a3c"/></svg>
<div class="t" style="left:1025px;width:1000px;text-align:center;top:871.3px;font-size:14px;color:#5d6bd6;font-weight:400;letter-spacing:0.3px;-webkit-text-stroke:0;">Button</div>
<div class="t" style="left:1488px;width:1000px;text-align:center;top:896.4px;font-size:14px;color:#2fae5c;font-weight:400;letter-spacing:0.3px;-webkit-text-stroke:0;">Button</div>
<div class="t" style="left:1935px;width:1000px;text-align:center;top:896.4px;font-size:14px;color:#d96b3d;font-weight:400;letter-spacing:0.3px;-webkit-text-stroke:0;">Dismiss</div>
<svg class="ov" width="3360" height="2100" viewBox="0 0 3360 2100"><defs><linearGradient id="eg" x1="0" x2="1" y1="0" y2="0"><stop offset="0" stop-color="#6b6b6b" stop-opacity="0"/><stop offset="0.6" stop-color="#6b6b6b"/></linearGradient></defs><rect x="1236" y="877.5" width="90" height="3" fill="url(#eg)"/><polyline points="1310,863 1326,879 1310,895" fill="none" stroke="#6b6b6b" stroke-width="3"/>
<g stroke="#6d6d6d" fill="none"><line x1="1720" y1="879" x2="1744" y2="879" stroke-width="3"/><circle cx="1757" cy="879" r="13" stroke-width="2.4"/><rect x="1751" y="872.5" width="12" height="13" stroke-width="2.2"/><line x1="1770" y1="879" x2="1789" y2="879" stroke-width="3"/><polyline points="1774,863 1790,879 1774,895" stroke-width="3"/></g>
<g stroke="#3a84f7" fill="none"><line x1="2184" y1="879" x2="2198" y2="879" stroke-width="3"/><circle cx="2211.3" cy="879" r="13" stroke-width="2.4"/><rect x="2205.3" y="872.5" width="12" height="13" stroke-width="2.2"/><line x1="2224" y1="879" x2="2237" y2="879" stroke-width="3"/><polyline points="2222,863 2238,879 2222,895" stroke-width="3.4"/></g>
<rect x="1103" y="1484" width="26" height="22" fill="none" stroke="#8a8a8a" stroke-width="2"/><rect x="1106" y="1487" width="4" height="16" fill="#8a8a8a"/></svg>
<div class="t" style="left:1167px;top:1480.7px;font-size:26px;color:#ffffff;font-weight:400;letter-spacing:-0.027px;">View as: iPhone 11 (</div>
<div class="t" style="left:1405.5px;top:1490.2px;font-size:16px;color:#8e8e8e;font-weight:400;letter-spacing:0px;">w</div>
<div class="t" style="left:1422px;top:1480.7px;font-size:26px;color:#ffffff;font-weight:400;letter-spacing:0px;">C</div>
<div class="t" style="left:1449.5px;top:1490.2px;font-size:16px;color:#8e8e8e;font-weight:400;letter-spacing:0px;">h</div>
<div class="t" style="left:1462.5px;top:1480.7px;font-size:26px;color:#ffffff;font-weight:400;letter-spacing:0px;">R</div>
<div class="t" style="left:1479px;top:1480.7px;font-size:26px;color:#ffffff;font-weight:400;letter-spacing:0px;">)</div>
<svg class="ov" width="3360" height="2100" viewBox="0 0 3360 2100"><g stroke="#8a8a8a" stroke-width="2"><line x1="1864" y1="1494" x2="1890" y2="1494"/><line x1="2031" y1="1494" x2="2058" y2="1494"/><line x1="2044.5" y1="1481" x2="2044.5" y2="1507"/></g></svg>
<div class="t" style="left:1935px;top:1482.2px;font-size:26px;color:#8a8a8a;font-weight:400;letter-spacing:-0.016px;">47%</div>
<svg class="ov" width="3360" height="2100" viewBox="0 0 3360 2100"><g stroke="#8a8a8a" stroke-width="2" fill="none"><path d="M2572,1489 V1482 H2579 M2595,1482 H2602 V1489 M2602,1499 V1506 H2595 M2579,1506 H2572 V1499"/><path d="M2594,1491 A7,7 0 1 0 2591,1500"/><polyline points="2588,1496 2591,1500 2587,1503"/><line x1="2625" y1="1482" x2="2625" y2="1506"/><rect x="2628" y="1484" width="16" height="7"/><rect x="2628" y="1496" width="24" height="8"/><line x1="2676" y1="1484" x2="2676" y2="1505"/><line x1="2705" y1="1484" x2="2705" y2="1505"/><line x1="2676" y1="1494" x2="2684" y2="1494"/><line x1="2697" y1="1494" x2="2705" y2="1494"/><rect x="2684" y="1488" width="13" height="12"/><line x1="2728" y1="1484" x2="2728" y2="1505"/><line x1="2757" y1="1484" x2="2757" y2="1505"/><line x1="2728" y1="1494" x2="2734" y2="1494"/><line x1="2751" y1="1494" x2="2757" y2="1494"/><path d="M2742.5,1487 L2750,1500 H2735 Z"/><path d="M2799,1482 H2791 V1506 H2819 V1482 H2811"/><line x1="2805" y1="1484" x2="2805" y2="1499"/><polyline points="2799,1493 2805,1499 2811,1493"/></g>
<rect x="562" y="1541" width="28" height="22" fill="none" stroke="#f0f0f0" stroke-width="2"/><path d="M569.5,1548.5 H582.5 L576,1556 Z" fill="none" stroke="#f0f0f0" stroke-width="1.8" stroke-linejoin="round"/>
<path d="M625,1543 H646 L655,1552 L646,1561 H625 Z" fill="#3b7ff0"/></svg>
<div class="t" style="left:564.5px;top:2062.1px;font-size:22px;color:#e6e6e6;font-weight:400;letter-spacing:0.583px;-webkit-text-stroke:0.5px #e6e6e6">Auto</div>
<svg class="ov" width="3360" height="2100" viewBox="0 0 3360 2100"><g stroke="#8c8c8c" stroke-width="2" fill="none"><polyline points="623.5,2069 629,2063 634.5,2069"/><polyline points="623.5,2075 629,2081 634.5,2075"/></g></svg>
<div class="a" style="left:652px;top:2056px;width:2px;height:32px;background:#48484a;"></div>
<svg class="ov" width="3360" height="2100" viewBox="0 0 3360 2100"><path d="M666,2071 Q681,2053 696,2071 Q681,2089 666,2071 Z" fill="none" stroke="#5f5f61" stroke-width="2"/><circle cx="681" cy="2071" r="4.5" fill="none" stroke="#5f5f61" stroke-width="2"/>
<circle cx="722" cy="2071" r="12.5" fill="none" stroke="#5f5f61" stroke-width="2"/><rect x="721" y="2066" width="2" height="12" fill="#5f5f61"/><rect x="721" y="2061.5" width="2" height="2.5" fill="#5f5f61"/></svg>
<div class="a" style="left:1337px;top:2050px;width:345px;height:44px;background:#313131;border-radius:8px;box-shadow:inset 0 0 0 1.5px #444446"></div>
<svg class="ov" width="3360" height="2100" viewBox="0 0 3360 2100"><circle cx="1359.5" cy="2072" r="12.3" fill="none" stroke="#a2a2a2" stroke-width="2"/><g fill="#a2a2a2"><rect x="1352.5" y="2066" width="14" height="2"/><rect x="1354.5" y="2070" width="10" height="2"/><rect x="1356.5" y="2074" width="6" height="2"/></g></svg>
<div class="t" style="left:1381px;top:2062.1px;font-size:22px;color:#808080;font-weight:400;letter-spacing:0.422px;-webkit-text-stroke:0.2px #808080">Filter</div>
<div class="t" style="left:1714px;top:2062.1px;font-size:22px;color:#e6e6e6;font-weight:400;letter-spacing:0.823px;-webkit-text-stroke:0.5px #e6e6e6">All Output</div>
<svg class="ov" width="3360" height="2100" viewBox="0 0 3360 2100"><g stroke="#8c8c8c" stroke-width="2" fill="none"><polyline points="1829,2069 1834.5,2063 1840,2069"/><polyline points="1829,2075 1834.5,2081 1840,2075"/></g></svg>
<div class="a" style="left:2334px;top:2050px;width:344px;height:44px;background:#313131;border-radius:8px;box-shadow:inset 0 0 0 1.5px #444446"></div>
<svg class="ov" width="3360" height="2100" viewBox="0 0 3360 2100"><circle cx="2356.5" cy="2072" r="12.3" fill="none" stroke="#a2a2a2" stroke-width="2"/><g fill="#a2a2a2"><rect x="2349.5" y="2066" width="14" height="2"/><rect x="2351.5" y="2070" width="10" height="2"/><rect x="2353.5" y="2074" width="6" height="2"/></g></svg>
<div class="t" style="left:2378px;top:2062.1px;font-size:22px;color:#808080;font-weight:400;letter-spacing:0.422px;-webkit-text-stroke:0.2px #808080">Filter</div>
<svg class="ov" width="3360" height="2100" viewBox="0 0 3360 2100"><g stroke="#a0a0a0" stroke-width="2" fill="none"><line x1="2710" y1="2060" x2="2736" y2="2060"/><path d="M2719,2060 V2056 H2727 V2060"/><path d="M2713,2060 L2715,2085 H2731 L2733,2060"/><line x1="2719" y1="2065" x2="2719" y2="2081"/><line x1="2723" y1="2065" x2="2723" y2="2081"/><line x1="2727" y1="2065" x2="2727" y2="2081"/></g></svg>
<div class="a" style="left:2751px;top:2056px;width:2px;height:32px;background:#48484a;"></div>
<svg class="ov" width="3360" height="2100" viewBox="0 0 3360 2100"><g stroke="#3a82f7" stroke-width="3.2" fill="none"><rect x="2763.5" y="2057.5" width="27" height="27"/><rect x="2799.5" y="2057.5" width="27" height="27"/></g><rect x="2768" y="2062" width="3.5" height="18" fill="#3a82f7"/><rect x="2818.5" y="2062" width="3.5" height="18" fill="#3a82f7"/>
<path d="M2912,94 H2924 L2930,100 V118 H2912 Z" fill="none" stroke="#9a9a9c" stroke-width="2"/><path d="M2923,94 V101 H2930" fill="none" stroke="#9a9a9c" stroke-width="2"/>
<circle cx="2980" cy="106" r="12.5" fill="none" stroke="#9a9a9c" stroke-width="2"/><path d="M2980,96 V106 L2975,111" fill="none" stroke="#9a9a9c" stroke-width="2"/>
<circle cx="3040" cy="106" r="12.5" fill="none" stroke="#9a9a9c" stroke-width="2"/><path d="M3035.5,102 Q3035.5,97.5 3040,97.5 Q3044.5,97.5 3044.5,101.5 Q3044.5,104 3041.5,105.5 Q3040,106.5 3040,109" fill="none" stroke="#9a9a9c" stroke-width="2"/><rect x="3039" y="111.5" width="2.2" height="2.4" fill="#9a9a9c"/>
<rect x="3088" y="96" width="24" height="20" fill="none" stroke="#9a9a9c" stroke-width="2"/><rect x="3092.5" y="100" width="7" height="7" fill="none" stroke="#9a9a9c" stroke-width="1.8"/><g fill="#9a9a9c"><rect x="3102" y="99" width="7" height="1.6"/><rect x="3102" y="102.5" width="7" height="1.6"/><rect x="3102" y="106" width="7" height="1.6"/><rect x="3092" y="110.5" width="17" height="1.8"/></g>
<path fill="#3d84f6" fill-rule="evenodd" d="M3151,91 H3169 V99 H3175 V107 H3169.5 L3160,120.5 L3150.5,107 H3145 V99 H3151 Z M3155,95 V107.5 L3160,114.5 L3165,107.5 V95 Z"/>
<rect x="3214" y="94" width="12" height="24" fill="none" stroke="#9a9a9c" stroke-width="2"/><g fill="#9a9a9c"><rect x="3220" y="98" width="5" height="1.6"/><rect x="3222" y="102" width="3" height="1.6"/><rect x="3220" y="106" width="5" height="1.6"/><rect x="3222" y="110" width="3" height="1.6"/><rect x="3220" y="114" width="5" height="1.6"/></g>
<circle cx="3280" cy="106" r="12.5" fill="none" stroke="#9a9a9c" stroke-width="2"/><line x1="3272" y1="106" x2="3288" y2="106" stroke="#9a9a9c" stroke-width="2"/></svg>
<div class="t" style="left:2851px;top:141.9px;font-size:21px;color:#e4e4e4;font-weight:700;letter-spacing:0.178px;">Storyboard Segue</div>
<div class="t" style="left:2913.4px;top:190.4px;font-size:22px;color:#dcdcdc;font-weight:400;letter-spacing:0.136px;">Identifier</div>
<div class="t" style="left:2947.5px;top:237.3px;font-size:22px;color:#dcdcdc;font-weight:400;letter-spacing:-0.879px;">Class</div>
<div class="t" style="left:2929px;top:280.7px;font-size:22px;color:#dcdcdc;font-weight:400;letter-spacing:-0.431px;">Module</div>
<div class="t" style="left:2919.3px;top:365.8px;font-size:22px;color:#dcdcdc;font-weight:400;letter-spacing:-0.143px;">Selector</div>
<div class="t" style="left:2956.8px;top:410.9px;font-size:22px;color:#dcdcdc;font-weight:400;letter-spacing:-0.61px;">Kind</div>
<div class="t" style="left:2878.3px;top:454.1px;font-size:22px;color:#dcdcdc;font-weight:400;letter-spacing:-0.256px;">Presentation</div>
<div class="t" style="left:2905.4px;top:498.1px;font-size:22px;color:#dcdcdc;font-weight:400;letter-spacing:-0.242px;">Transition</div>
<div class="t" style="left:2889.8px;top:587.0px;font-size:22px;color:#dcdcdc;font-weight:400;letter-spacing:-0.775px;">Peek &amp; Pop</div>
<div class="a" style="left:3009px;top:181px;width:335px;height:36px;background:#37383c;border-radius:2px;box-shadow:inset 0 0 0 1.5px #46474b"></div>
<div class="t" style="left:3016px;top:190.4px;font-size:22px;color:#707074;font-weight:400;letter-spacing:0.958px;">Identifier</div>
<div class="a" style="left:3009px;top:227px;width:335px;height:32px;background:#37383c;border-radius:2px;box-shadow:inset 0 0 0 1.5px #46474b"></div>
<div class="t" style="left:3016px;top:235.3px;font-size:22px;color:#808084;font-weight:400;letter-spacing:0.611px;">UIStoryboardSegue</div>
<div class="a" style="left:3009px;top:271px;width:335px;height:31px;background:#37383c;border-radius:2px;box-shadow:inset 0 0 0 1.5px #46474b"></div>
<div class="t" style="left:3016px;top:278.7px;font-size:22px;color:#707074;font-weight:400;letter-spacing:0.135px;">None</div>
<svg class="ov" width="3360" height="2100" viewBox="0 0 3360 2100"><rect x="3010.5" y="318.5" width="23" height="23" rx="5" fill="#3c3d41" stroke="#48494d" stroke-width="1"/></svg>
<div class="t" style="left:3044px;top:319.6px;font-size:22px;color:#707074;font-weight:400;letter-spacing:0.62px;">Inherit Module From Target</div>
<div class="a" style="left:3009px;top:358px;width:335px;height:34px;background:#37383c;border-radius:2px;box-shadow:inset 0 0 0 1.5px #46474b"></div>
<div class="a" style="left:3010px;top:404px;width:334px;height:32px;background:linear-gradient(#67686b,#5f6063);border-radius:6px;box-shadow:inset 0 1px 0 rgba(255,255,255,0.08)"></div>
<div class="a" style="left:3316px;top:404px;width:28px;height:32px;background:linear-gradient(#3f86f3,#2f6fe0);border-radius:0 6px 6px 0"></div>
<svg class="ov" width="3360" height="2100" viewBox="0 0 3360 2100"><g stroke="#fff" stroke-width="2" fill="none" stroke-linecap="round" stroke-linejoin="round"><polyline points="3324,417.5 3330.5,411.5 3337,417.5"/><polyline points="3324,423 3330.5,429 3337,423"/></g></svg>
<div class="t" style="left:3024px;top:410.9px;font-size:22px;color:#ececec;font-weight:400;letter-spacing:0.6px;">Modal</div>
<div class="a" style="left:3010px;top:448px;width:334px;height:32px;background:linear-gradient(#67686b,#5f6063);border-radius:6px;box-shadow:inset 0 1px 0 rgba(255,255,255,0.08)"></div>
<div class="a" style="left:3316px;top:448px;width:28px;height:32px;background:linear-gradient(#3f86f3,#2f6fe0);border-radius:0 6px 6px 0"></div>
<svg class="ov" width="3360" height="2100" viewBox="0 0 3360 2100"><g stroke="#fff" stroke-width="2" fill="none" stroke-linecap="round" stroke-linejoin="round"><polyline points="3324,461.5 3330.5,455.5 3337,461.5"/><polyline points="3324,467 3330.5,473 3337,467"/></g></svg>
<div class="t" style="left:3024px;top:454.1px;font-size:22px;color:#ececec;font-weight:400;letter-spacing:0.6px;">Same As Destination</div>
<div class="a" style="left:3010px;top:492px;width:334px;height:32px;background:linear-gradient(#67686b,#5f6063);border-radius:6px;box-shadow:inset 0 1px 0 rgba(255,255,255,0.08)"></div>
<div class="a" style="left:3316px;top:492px;width:28px;height:32px;background:linear-gradient(#3f86f3,#2f6fe0);border-radius:0 6px 6px 0"></div>
<svg class="ov" width="3360" height="2100" viewBox="0 0 3360 2100"><g stroke="#fff" stroke-width="2" fill="none" stroke-linecap="round" stroke-linejoin="round"><polyline points="3324,505.5 3330.5,499.5 3337,505.5"/><polyline points="3324,511 3330.5,517 3337,511"/></g></svg>
<div class="t" style="left:3024px;top:498.1px;font-size:22px;color:#ececec;font-weight:400;letter-spacing:0.6px;">Same As Destination</div>
<svg class="ov" width="3360" height="2100" viewBox="0 0 3360 2100"><rect x="3008" y="538" width="23.5" height="23.5" rx="5" fill="#3b7ff0"/><polyline points="3013.5,550 3018.5,555.5 3026.5,544" fill="none" stroke="#fff" stroke-width="2.4" stroke-linecap="round" stroke-linejoin="round"/></svg>
<div class="t" style="left:3042.6px;top:540.1px;font-size:22px;color:#e6e6e6;font-weight:400;letter-spacing:0.614px;">Animates</div>
<div class="a" style="left:2856px;top:572px;width:488px;height:2px;background:#3c3d41;"></div>
<svg class="ov" width="3360" height="2100" viewBox="0 0 3360 2100"><rect x="3008.5" y="584.5" width="23" height="23" rx="5" fill="#58595d" stroke="#5e5f63" stroke-width="1"/></svg>
<div class="t" style="left:3042.6px;top:587.0px;font-size:22px;color:#e6e6e6;font-weight:400;letter-spacing:0.58px;">Preview &amp; Commit Segues</div>
<div class="a" style="left:2842px;top:640px;width:518px;height:2px;background:#3c3d41;"></div>
<div class="a" style="left:3280px;top:83px;width:80px;height:325px;background:linear-gradient(175deg,#c4bec6 0%,#bfb6bf 50%,#b9a9b1 100%);border-radius:7px 0 0 7px;box-shadow:0 2px 18px rgba(0,0,0,0.45)"></div>
<svg class="ov" width="3360" height="2100" viewBox="0 0 3360 2100"><polyline points="3330.5,215.5 3322.5,245.5 3330.5,276" fill="none" stroke="#3a3039" stroke-width="13.5" stroke-linecap="round" stroke-linejoin="round"/></svg>
</body></html>
